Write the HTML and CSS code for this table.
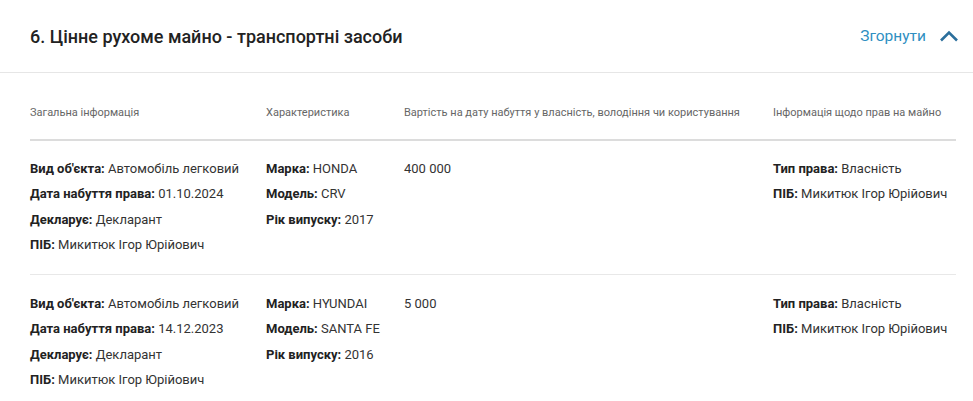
FILE: index.html
```html
<!DOCTYPE html>
<html lang="uk">
<head>
    <meta charset="UTF-8">
    <meta name="viewport" content="width=device-width, initial-scale=1.0">
    <title>Цінне рухоме майно</title>
    <link rel="stylesheet" href="styles.css">
</head>
<body>

    <!-- Section header -->
    <div class="section-head">
        <h2>6. Цінне рухоме майно - транспортні засоби</h2>
        <a class="toggle" href="#">
            Згорнути
            <svg width="20" height="12" viewBox="0 0 20 12">
                <path d="M2 10.5 L10 2.5 L18 10.5" fill="none" stroke="#2b6f9c" stroke-width="2.6"/>
            </svg>
        </a>
    </div>

    <!-- Table -->
    <div class="assets">
        <div class="row head">
            <div>Загальна інформація</div>
            <div>Характеристика</div>
            <div>Вартість на дату набуття у власність, володіння чи користування</div>
            <div>Інформація щодо прав на майно</div>
        </div>

        <div class="row">
            <div>
                <p><b>Вид об'єкта:</b> Автомобіль легковий</p>
                <p><b>Дата набуття права:</b> 01.10.2024</p>
                <p><b>Декларує:</b> Декларант</p>
                <p><b>ПІБ:</b> Микитюк Ігор Юрійович</p>
            </div>
            <div>
                <p><b>Марка:</b> HONDA</p>
                <p><b>Модель:</b> CRV</p>
                <p><b>Рік випуску:</b> 2017</p>
            </div>
            <div>
                <p>400 000</p>
            </div>
            <div>
                <p><b>Тип права:</b> Власність</p>
                <p><b>ПІБ:</b> Микитюк Ігор Юрійович</p>
            </div>
        </div>

        <div class="row">
            <div>
                <p><b>Вид об'єкта:</b> Автомобіль легковий</p>
                <p><b>Дата набуття права:</b> 14.12.2023</p>
                <p><b>Декларує:</b> Декларант</p>
                <p><b>ПІБ:</b> Микитюк Ігор Юрійович</p>
            </div>
            <div>
                <p><b>Марка:</b> HYUNDAI</p>
                <p><b>Модель:</b> SANTA FE</p>
                <p><b>Рік випуску:</b> 2016</p>
            </div>
            <div>
                <p>5 000</p>
            </div>
            <div>
                <p><b>Тип права:</b> Власність</p>
                <p><b>ПІБ:</b> Микитюк Ігор Юрійович</p>
            </div>
        </div>
    </div>

</body>
</html>
```

FILE: styles.css
```css
* {
    margin: 0;
    padding: 0;
    box-sizing: border-box;
    font-family: Roboto, "Liberation Sans", sans-serif;
}

body {
    background: #fff;
    color: #333;
}

.section-head {
    height: 73px;
    display: flex;
    justify-content: space-between;
    align-items: center;
    padding: 0 14px 0 30px;
    border-bottom: 1px solid #e6e6e6;
}

.section-head h2 {
    font-size: 18px;
    font-weight: 500;
    color: #222;
}

.toggle {
    display: flex;
    align-items: center;
    gap: 13px;
    color: #2f8fc2;
    font-size: 15.5px;
    text-decoration: none;
}

.assets {
    margin: 0 17px 0 30px;
}

.row {
    display: grid;
    grid-template-columns: 236px 138px 369px 1fr;
    padding: 15px 0 17px;
    border-bottom: 1px solid #e8e8e8;
}

.row + .row + .row {
    padding-top: 16px;
}

.row.head {
    padding: 33px 0 19px;
    border-bottom: 2px solid #dcdcdc;
    font-size: 11px;
    color: #666;
    line-height: 14px;
}

.row p {
    font-size: 13px;
    line-height: 25.3px;
    color: #333;
}

.row p b {
    font-weight: 700;
    color: #222;
}

.row:last-child {
    border-bottom: none;
}
```
